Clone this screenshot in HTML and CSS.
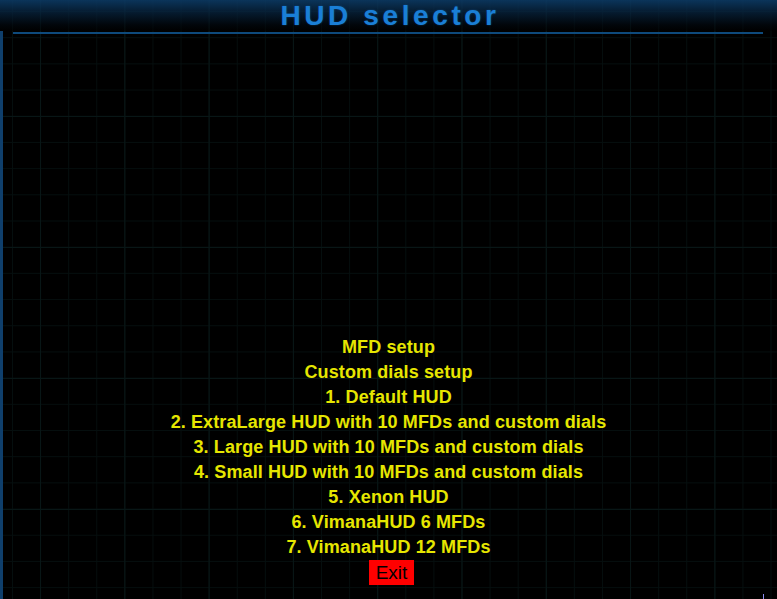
FILE: index.html
```html
<!DOCTYPE html>
<html lang="en">
<head>
<meta charset="utf-8">
<title>HUD selector</title>
<link rel="stylesheet" href="styles.css">
</head>
<body>
<div class="screen">
  <header class="titlebar">
    <h1 class="title">HUD selector</h1>
  </header>
  <div class="frame">
    <div class="rule"></div>
    <nav class="menu">
      <div class="item">MFD setup</div>
      <div class="item">Custom dials setup</div>
      <div class="item">1. Default HUD</div>
      <div class="item">2. ExtraLarge HUD with 10 MFDs and custom dials</div>
      <div class="item">3. Large HUD with 10 MFDs and custom dials</div>
      <div class="item">4. Small HUD with 10 MFDs and custom dials</div>
      <div class="item">5. Xenon HUD</div>
      <div class="item">6. VimanaHUD 6 MFDs</div>
      <div class="item">7. VimanaHUD 12 MFDs</div>
      <div class="item exit">Exit</div>
    </nav>
    <span class="corner-tick"></span>
  </div>
</div>
</body>
</html>
```

FILE: styles.css
```css
html, body {
  margin: 0;
  padding: 0;
  background: #000;
}

.screen {
  position: relative;
  width: 777px;
  height: 599px;
  overflow: hidden;
  display: flex;
  flex-direction: column;
  background-color: #000;
  /* faint teal grid across the whole display */
  background-image:
    linear-gradient(to right, #081616 1px, transparent 1px),
    linear-gradient(to bottom, #081616 1px, transparent 1px),
    linear-gradient(to right, #050e0e 1px, transparent 1px),
    linear-gradient(to bottom, #050e0e 1px, transparent 1px);
  background-size: 84.3px 131px, 84.3px 131px, 28.1px 26.2px, 28.1px 26.2px;
  background-position: 40px 116px, 40px 116px, 12px 11px, 12px 11px;
  font-family: "Liberation Sans", Arial, sans-serif;
}

.titlebar {
  height: 31px;
  flex: none;
  display: flex;
  justify-content: center;
  align-items: flex-start;
  background: linear-gradient(to bottom, rgba(12, 58, 100, 0.9) 0%, rgba(8, 40, 70, 0.75) 35%, rgba(2, 10, 18, 0.6) 80%, rgba(0, 0, 0, 0.5) 100%);
}

.title {
  margin: 0;
  padding-left: 3px;
  font-size: 28px;
  font-weight: bold;
  letter-spacing: 3.6px;
  line-height: 31px;
  color: #1a7fd6;
  text-shadow: 0 0 2px rgba(20, 110, 200, 0.5);
}

.frame {
  position: relative;
  flex: 1;
  display: flex;
  flex-direction: column;
  border-left: 3px solid #0f3f6c;
}

.rule {
  height: 2px;
  margin: 1px 14px 0 10px;
  background: #0e4a7c;
}

.menu {
  flex: 1;
  display: flex;
  flex-direction: column;
  justify-content: flex-end;
  align-items: center;
  padding-bottom: 14px;
  padding-right: 3px;
}

.item {
  line-height: 25px;
  font-size: 18px;
  font-weight: bold;
  letter-spacing: 0.12px;
  color: #e6e600;
  white-space: nowrap;
}

.item.exit {
  margin-left: 6px;
  padding: 0 7px;
  background: #ff0000;
  color: #000;
  font-weight: normal;
  font-size: 19px;
  letter-spacing: 0;
}

.corner-tick {
  position: absolute;
  right: 13px;
  bottom: 0;
  width: 1px;
  height: 5px;
  background: #8c8cf0;
}
```
